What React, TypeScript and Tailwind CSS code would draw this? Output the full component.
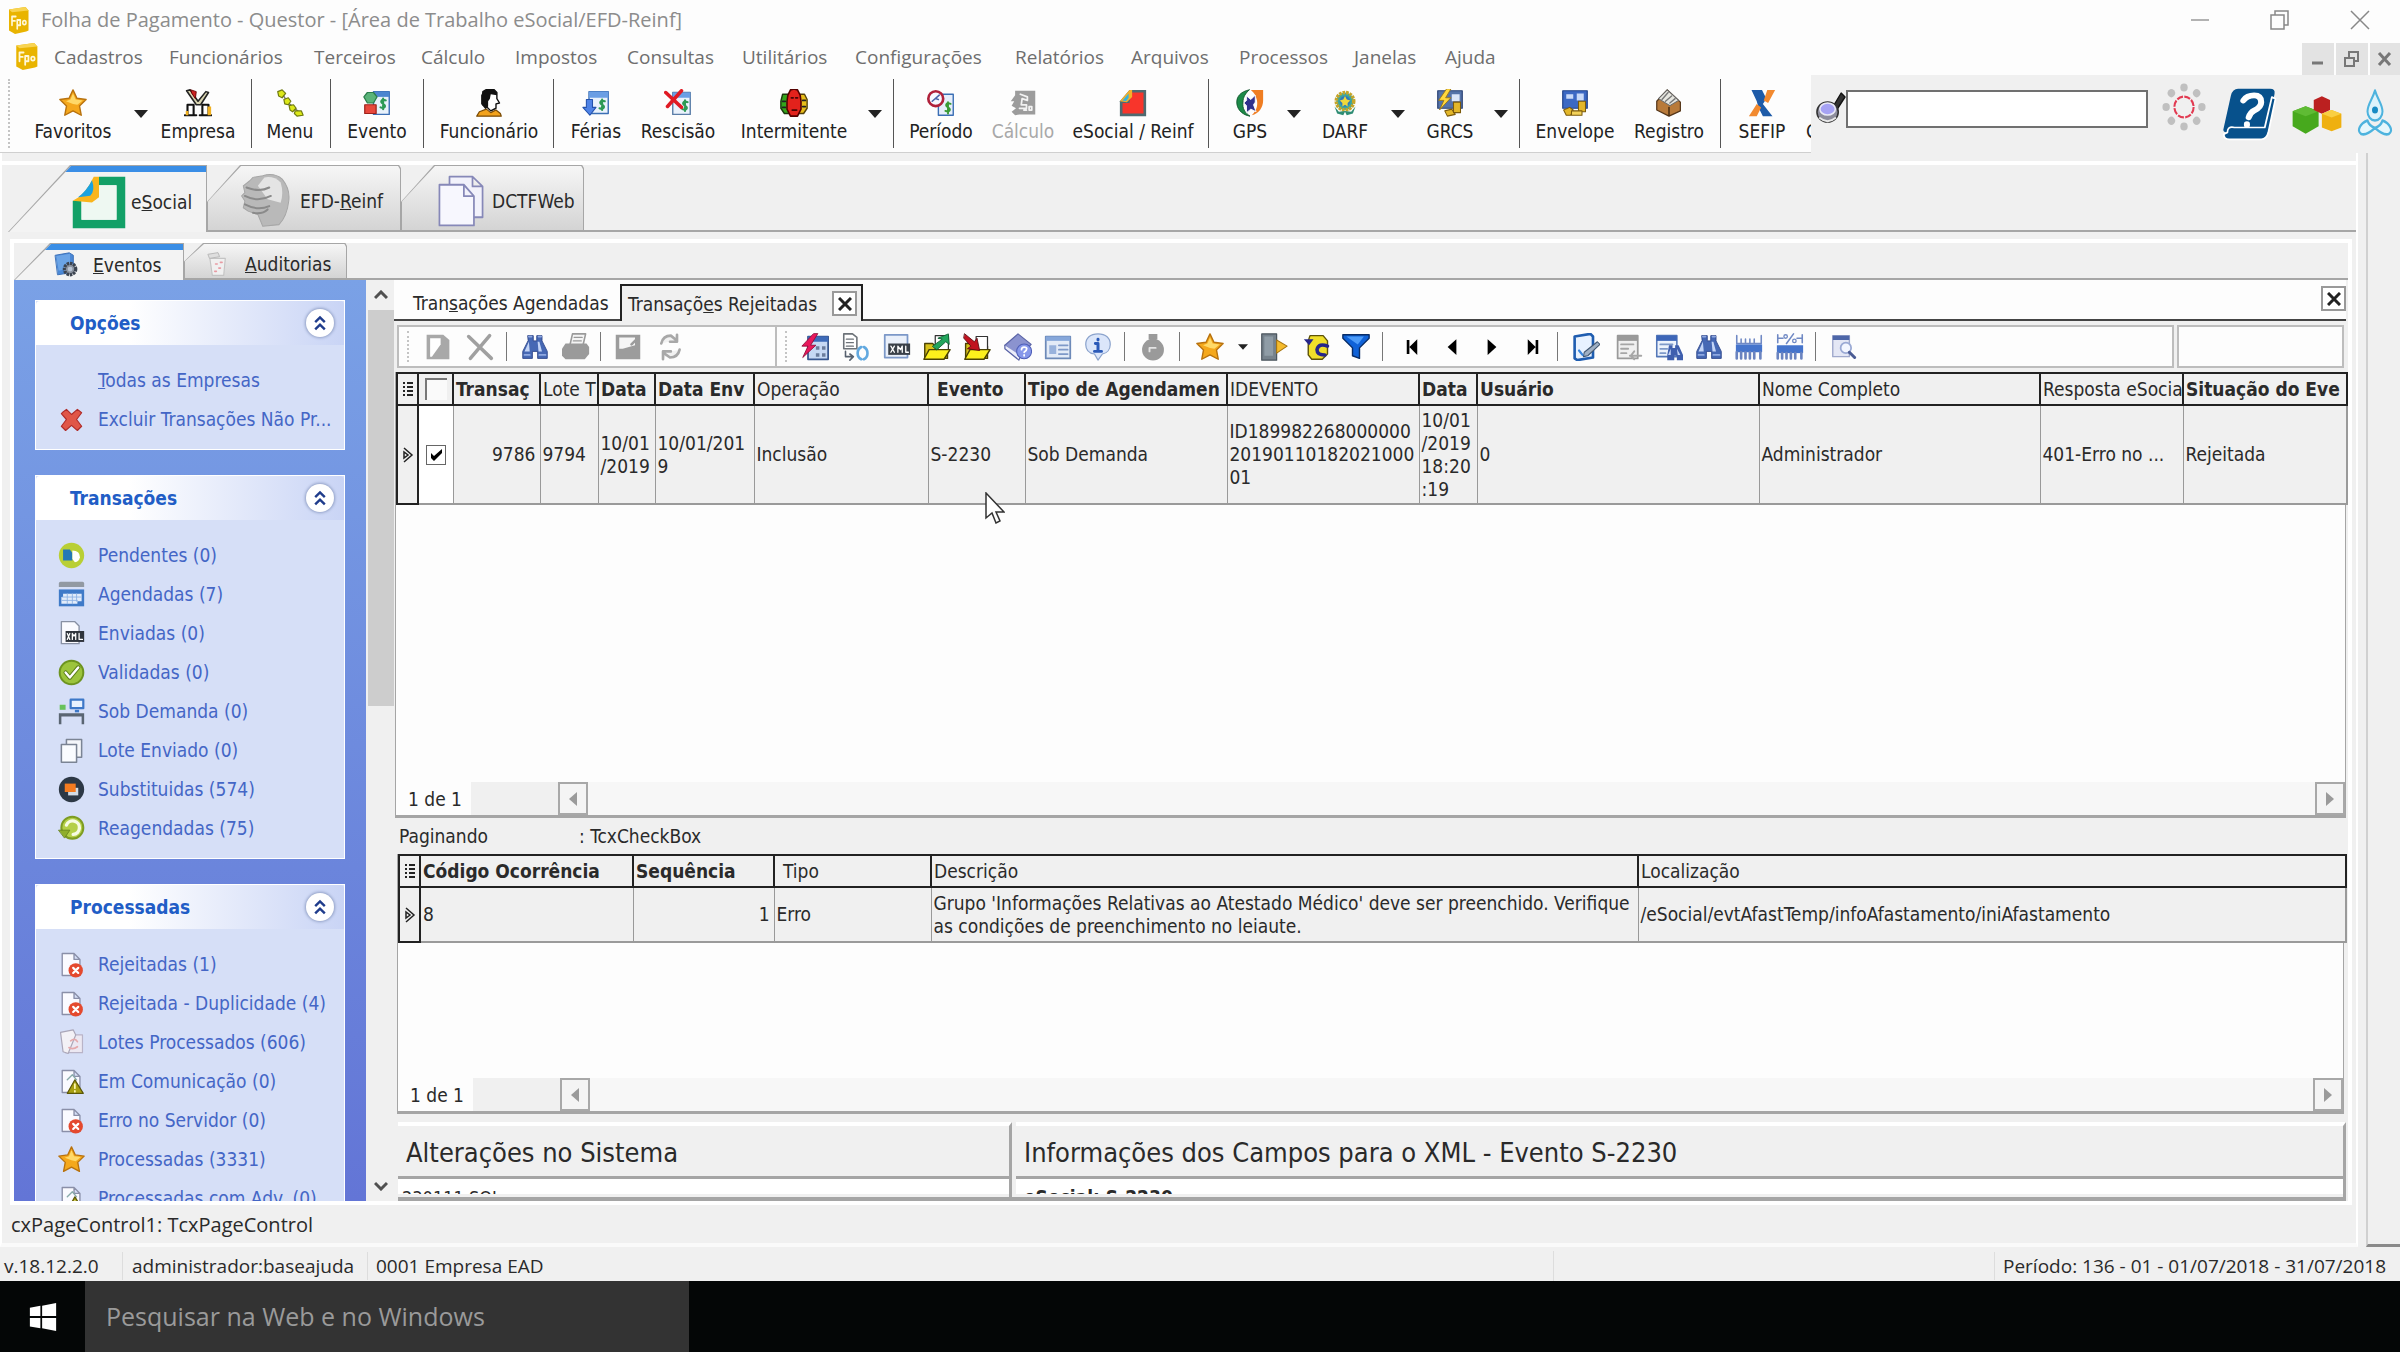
import React from 'react';

const P = (d: string, fill: string, stroke?: string, w?: number) => (
  <path d={d} fill={fill} stroke={stroke} strokeWidth={w ?? 1} strokeLinejoin="round" strokeLinecap="round" />
);

const Sheet = ({ c = '#8a8fa8' }: { c?: string }) => P('M5 3h14l7 7v19H5z M19 3v7h7', '#fafaff', c, 1.6);

const BINOC = 'M8 3h6v6h4V3h6v6l6 12v8H19v-8h-6v8H2v-8l6-12z';

// every drawing uses a 32x32 box
const icons: Record<string, React.ReactNode> = {
  logo: (
    <>
      {P('M4 4l22-3 4 4v23l-3 1-15 3-8-4z', '#e9b400')}
      {P('M4 4l22-3 4 4-22 2z', '#f8d452')}
      {P('M8 22V12h5M8 17h4M15 26V16h4v6h-4', 'none', '#fff8d8', 2.2)}
      <circle cx="24.500" cy="19" r="2.200" fill="none" stroke="#fff8d8" strokeWidth="2" />
    </>
  ),
  star: (
    <>
      {P('M16 1l4.5 9.6L31 12l-7.6 7.4L25.4 30 16 25 6.600 30l2-10.600L1 12l10.500-1.400z', '#f5a81c', '#b8720e', 1.6)}
      {P('M16 5l3 7 8 1-6 5-5-1-8-3 5-2z', '#ffd968')}
    </>
  ),
  tools: (
    <>
      {P('M3 2l4-1 9 13 9-11 3 1-9 14h-5z', '#d8d4b0', '#222', 1.8)}
      {P('M8 1l6 2-1 8-4-6z', '#c22', '#600', 1)}
      {P('M4 30V18h7v12M21 30V18h7v12M1 30h13M18 30h13', '#fff', '#111', 2.4)}
      {P('M2 25h3v5H2zM27 20h4v10h-4z', '#f0b020')}
    </>
  ),
  chain: (
    <>
      {P('M7 5l6 10 7 6 6 5', 'none', '#777', 1.6)}
      {P('M2 3l5-2 4 4-4 5-4-2zM9 12l5-2 3 4-3 4-4-1zM15 19l5-1 3 4-4 4-3-2zM22 25h7l2 5-7 1-3-3z', '#dce818', '#6f7a10', 1.4)}
    </>
  ),
  evento: (
    <>
      {P('M12 3h18v26H12z', '#e8f1fb', '#3b6fb5', 1.6)}
      {P('M12 3h18v6H12z', '#4c86d0')}
      {P('M26 13c-5-2-7 2-3 4s2 6-3 4M23 11v12', 'none', '#2d9a55', 2.4)}
      {P('M5 4h7l4 5-4 7H5L1 9z', '#59b379', '#2b7e4b', 1.4)}
      {P('M2 18h13v10H2z', '#e8483c', '#9e221b', 1.4)}
    </>
  ),
  person: (
    <>
      {P('M9 3l5-3h7l4 4v7l3 5-4 1v5l-6 3-5-5-4-2V7z', '#fff', '#111', 1.6)}
      {P('M9 3l5-3h7l4 4v3l-7-1-1 5-2 3v6l-3 3-5-6V7z', '#111')}
      {P('M2 31l3-5 8-3 5 4 6-3 5 4 1 3z', '#f2a21c', '#7a4a05', 1.4)}
    </>
  ),
  ferias: (
    <>
      {P('M8 3h22v25H8z', '#eaf2fc', '#3b6fb5', 1.6)}
      {P('M8 3h22v7H8z', '#6a9ee4')}
      {P('M26 14c-5-2-7 2-3 4s2 6-3 4M23 12v12', 'none', '#2d9a55', 2.4)}
      {P('M5 12h7v9h4l-7 9-8-9h4z', '#4f83e6', '#2452ac', 1.2)}
    </>
  ),
  rescisao: (
    <>
      {P('M10 4h20v25H10z', '#eaf2fc', '#5b7ea8', 1.6)}
      {P('M10 4h20v6H10z', '#6a9ee4')}
      {P('M27 15c-5-2-7 2-3 4s2 6-3 4M24 13v12', 'none', '#2d9a55', 2.4)}
      {P('M2 4l18 17M20 2L4 20', 'none', '#e01a24', 4)}
    </>
  ),
  trio: (
    <>
      {P('M3 6h9v22H5l-4-6v-8z', '#35a51c', '#1a3b0d', 1.6)}
      {P('M20 6h8l3 6v10l-4 6h-7z', '#e8bd1a', '#54420b', 1.6)}
      {P('M12 1l4-1 4 1 3 6 1 7v9l-4 8h-8l-4-8v-9l1-7z', '#e3221c', '#500', 1.8)}
      {P('M3 14h3M26 13h3M3 21h3M26 20h3', 'none', '#222', 2)}
      {P('M13 10h2M18 10h2M14 24h5', 'none', '#4a0505', 2)}
    </>
  ),
  periodo: (
    <>
      {P('M13 6h17v24H13z', '#e6eefb', '#3b6fb5', 1.6)}
      {P('M27 17c-5-2-7 2-3 4s2 6-3 4M24 15v13', 'none', '#3a9a35', 2.2)}
      <circle cx="10" cy="11" r="8.500" fill="#f6f8ff" stroke="#b0203a" strokeWidth="3" />
      {P('M6 14l8-7M10 11l3 1', 'none', '#4a62a8', 1.8)}
    </>
  ),
  calculo: (
    <>
      {P('M7 2h23v27H12l-5 1-4-4 5-4-5-3 3-5H2l5-7z', '#9c9c9c')}
      {P('M13 6l8 3v4l-6-2-1 7h6v4h-8M23 20h3v4h-3zM17 24h3', 'none', '#f2f2f2', 2)}
    </>
  ),
  reinf: (
    <>
      {P('M12 1h19v30H1V14z', '#4f6a70')}
      {P('M14 4h14v24H4V16h8z', '#f8352b')}
      {P('M1 14L12 1h3v8l-6 6z', '#f4b02a')}
      {P('M4 13l7-8v5l-3 4z', '#35b3dd')}
    </>
  ),
  gps: (
    <>
      {P('M15 1C5 3 0 9 1 17c1 8 8 13 15 14-6-4-9-9-8-16 0-6 3-10 7-14z', '#1c8a48', '#0d5429', 1)}
      {P('M17 1h14v12c0 8-5 15-13 17 5-5 7-10 6-17-1-5-3-9-7-12z', '#ef7d22')}
      {P('M12 8l5 4 5-5v8l-2 3 3 8-6-3-5 4v-8l-3-3 3-3z', '#30308c', '#fff', 1)}
    </>
  ),
  darf: (
    <>
      <circle cx="16" cy="14" r="10" fill="#3aa6a0" stroke="#c6a528" strokeWidth="4" strokeDasharray="3 1" />
      <circle cx="16" cy="14" r="6" fill="#2f78bb" />
      {P('M16 8l2 4 4 1-3 3v4l-3-2-3 2v-4l-3-3 4-1z', '#f0d83b')}
      {P('M4 20l3 8 7 2 2-4 2 4 7-2 3-8-5 6-7-1-7 1z', '#2f8d74')}
    </>
  ),
  coins: (
    <>
      {P('M2 2h28v20H2z', '#3c69c4', '#23458c', 1.4)}
      {P('M6 6h8v5H6zM18 5h8v8h-8z', '#c9daf8')}
      {P('M20 14h8v12h-8z', '#e3b72a', '#7c5b0b', 1.2)}
      {P('M3 24l7-3 4 3-3 6H6z', '#e3b72a', '#7c5b0b', 1.2)}
      {P('M12 25h12v5H12z', '#f3d25a', '#7c5b0b', 1.2)}
    </>
  ),
  grcs: (
    <>
      {P('M2 2h28v20H2z', '#5573a8', '#2c4476', 1.4)}
      {P('M18 6h9v8h-9z', '#dbe5f8')}
      {P('M12 0L3 13h6l-5 11 13-14h-6l6-10z', '#ffd83e', '#9c7410', 1)}
      {P('M20 15h8v12h-8zM10 25l8-2 4 6-9 2z', '#e3b72a', '#7c5b0b', 1.2)}
    </>
  ),
  registro: (
    <>
      {P('M14 1l15 14v10L16 31 2 24V14z', '#b87a3a', '#54361a', 1.4)}
      {P('M14 1l13 12-10 6L4 11z', '#e6e6e0', '#666', 1.2)}
      {P('M15 4L8 12M19 8l-7 6M23 11l-6 5', 'none', '#777', 1.6)}
      {P('M16 21v9', 'none', '#3f270f', 1.6)}
    </>
  ),
  sefip: (
    <>
      {P('M4 1h12l5 10-4 6 11 14H17l-5-10-2-7z', '#1e5ba8')}
      {P('M22 1h9l-8 15-5-3zM10 17l5 4-5 10H1z', '#f28a30')}
    </>
  ),
  spyglass: (
    <>
      {P('M19 15L27 2l4 4-8 12z', '#333', '#111', 1.4)}
      <ellipse cx="13" cy="21" rx="11" ry="10" fill="#8d8d9c" stroke="#333" strokeWidth="1.600" />
      <ellipse cx="13" cy="18" rx="8" ry="6" fill="#a6a2f4" stroke="#e9e9f6" strokeWidth="1.600" />
      {P('M5 27c5 4 11 4 16 0', 'none', '#e9e9e9', 2)}
    </>
  ),
  ring: (
    <>
      {[0, 45, 90, 135, 180, 225, 270, 315].map((a) => (
        <circle key={a} cx="16" cy="3" r="2.700" fill="#c0c0c0" transform={`rotate(${a} 16 16)`} />
      ))}
      <circle cx="16" cy="16" r="7" fill="none" stroke="#e23b52" strokeWidth="1.500" strokeDasharray="4.500 1" />
    </>
  ),
  help: (
    <>
      {P('M9 1h18q3 0 2.500 3L26 24q-1 3-4 3H3Q0 27 1 24L5 5q1-4 4-4z', '#07518c')}
      {P('M3 27q0-4 4-3h17l4-18 2 1-4 20q-1 4-4 4H4q-3 0-3-3z', '#07518c', '#fff', 1)}
      {P('M12 8q2-3 6-3t4 4q0 3-4 5-2 1-3 4M14 22v0.500', 'none', '#fff', 3.4)}
    </>
  ),
  cubes: (
    <>
      {P('M1 13l8-4 8 4v12l-8 6-8-6z', '#47a91d')}
      {P('M1 13l8 4 8-4-8-4z', '#5fbb34')}
      {P('M14 4l5-3 5 3v8l-5 3-5-3z', '#bb2020')}
      {P('M19 15l6-3 6 3v11l-6 3-6-3z', '#efb010')}
      {P('M19 15l6 3 6-3-6-3z', '#f9cf42')}
    </>
  ),
  yoga: (
    <>
      {P('M16 1c2 6 6 9 6 14a6 6 0 0 1-12 0c0-5 4-8 6-14z', '#ddf3fb', '#4db3de', 1.6)}
      <circle cx="16" cy="14" r="2.400" fill="#178bc4" />
      {P('M10 21c-6 2-9 7-5 9 3 1 7-1 11-4 4 3 8 5 11 4 4-2 1-7-5-9-1 3-3 4-6 5-3-1-5-2-6-5z', '#e6f7fc', '#4db3de', 1.7)}
    </>
  ),
  esocial: (
    <>
      {P('M16 1h15v30H1V15h5v11h20V6H14z', '#12a067')}
      {P('M16 6h10v20H6V15h9z', '#eef8f2')}
      {P('M1 15Q8 12 13 1h3v12l-4 3z', '#f9b51c')}
      {P('M4 13Q9 9 12 3q2 6-1 9z', '#1aa2e0')}
    </>
  ),
  fist: (
    <>
      {P('M14 1q7-2 12 2 5 6 4 13-1 9-6 14l-10 1-3-7-6-2-3-2 1-4-2-3 2-2-1-4 4-3 2-2z', '#b9b9b9', '#a6a6a6', 0.600)}
      {P('M15 2q6-1 10 3 2 6 0 12l-8-2-6-8z', '#e4e4e4')}
      {P('M4 8q8 3 14 0M3 13q8 4 16 0M3 18q8 4 15 1M8 23q6 1 9-2', 'none', '#8a8a8a', 1.200)}
    </>
  ),
  pages: (
    <>
      {P('M8 1h16l7 6v19H8z M24 1v6h7', '#f2f2fb', '#8688b8', 1.2)}
      {P('M1 6h17l7 7v18H1z M18 6v7h7', '#f7f7fe', '#8688b8', 1.2)}
    </>
  ),
  gear: (
    <>
      {P('M3 4l17-3 5 3v21L6 28z', '#4a88d6', '#3d71b8', 1.2)}
      {P('M4 5l17-3v18L7 23z', '#6ba4e6')}
      <circle cx="21" cy="21" r="7" fill="#8b93a0" stroke="#3c4450" strokeWidth="4" strokeDasharray="3 1" />
      <circle cx="21" cy="21" r="3" fill="#b9c4d4" />
    </>
  ),
  bin: (
    <>
      {P('M6 9h19l-2 21H9z', '#f0f0f0', '#c4c4c4', 1.4)}
      {P('M4 4l12-2 2 5-12 2z', '#dedede', '#b8b8b8', 1.2)}
      {P('M13 16h2M19 14h2M17 21h2M12 25h2', 'none', '#e89aa2', 2)}
    </>
  ),
  lots: (
    <>
      {P('M9 7h20v21H9z', '#ece8f2', '#b9b4c8', 1.4)}
      {P('M3 4l15-3 3 6-9 22-6-2z', '#f3f1f6', '#aaa6b8', 1.4)}
      {P('M15 14q5-4 8 1M13 22q5 3 10-1', 'none', '#e4a9ac', 2)}
    </>
  ),
  redx: P('M6 7l4-3 6 6 7-6 5 4-6 8 6 8-5 5-7-6-7 6-5-5 6-8-6-7z', '#e05648', '#b02c2a', 1.4),
  pend: (
    <>
      <circle cx="16" cy="16" r="15" fill="#b9cf35" />
      {P('M6 9h8l3 4v9H6z', '#2478b5')}
      {P('M17 10q9 0 9 8-1 5-6 6l-3-4z', '#fff')}
    </>
  ),
  calendar: (
    <>
      {P('M1 3q0-2 2-2h26q2 0 2 2v4H1z', '#9299a2')}
      {P('M1 10h30v20H1z', '#3f7ac8')}
      {P('M6 15h22v9h-5v3H4v-8h2z', '#e2ecfa')}
      {P('M5 19h22M5 23h18M11 15v12M17 15v12M22 15v9', 'none', '#8bb0e2', 1)}
    </>
  ),
  xml: (
    <>
      {P('M4 2h16l5 5v21H4z', '#fafaff', '#8890a4', 1.6)}
      {P('M9 13h22v13H9z', '#2f343c')}
      {P('M11 16l3 7M14 16l-3 7M17 23v-7l2 3 2-3v7M25 16v7h4', 'none', '#fff', 1.5)}
    </>
  ),
  xmlgrid: (
    <>
      {P('M2 2h26v26H2z', '#eaf0fa', '#7c98c8', 2)}
      {P('M6 12h25v13H6z', '#3a4048')}
      {P('M9 15l4 7M13 15l-4 7M17 22v-7l3 4 2-4v7M26 15v7h3', 'none', '#fff', 1.5)}
    </>
  ),
  check: (
    <>
      <circle cx="16" cy="16" r="14" fill="#9cc43c" stroke="#6d9420" strokeWidth="2.400" />
      {P('M9 16l5 6 10-12', 'none', '#587a18', 5)}
      {P('M9 16l5 6 10-12', 'none', '#fff', 2.8)}
    </>
  ),
  desk: (
    <>
      {P('M15 2h15v10H15z', '#e8f2ff', '#3d78c8', 2.6)}
      {P('M20 14h5v3h-5z', '#3d78c8')}
      {P('M2 8h7v6H2z', '#69c25a')}
      {P('M1 18h30v13h-3v-9H4v9H1z', '#5a6572')}
    </>
  ),
  stack: (
    <>
      {P('M10 3h18v21H10z', '#f4f6fa', '#7b8494', 1.8)}
      {P('M4 9h18v21H4z', '#fafcff', '#7b8494', 1.8)}
    </>
  ),
  subst: (
    <>
      <circle cx="16" cy="16" r="15" fill="#2d3845" />
      {P('M12 14h12v9H12z', '#d3dbe4')}
      {P('M8 9h13v10H8z', '#f47b20')}
    </>
  ),
  redo: (
    <>
      <circle cx="17" cy="15" r="13" fill="#b4cf48" stroke="#7d9c22" strokeWidth="2.400" />
      {P('M10 12a8 8 0 1 1 8 11', 'none', '#f6fbe4', 4)}
      {P('M1 18h13l-6 9z', '#8fae2c', '#66821a', 1)}
    </>
  ),
  reject: (
    <>
      <Sheet />
      <circle cx="21" cy="23" r="8.500" fill="#e4492e" />
      {P('M18 20l6 6M24 20l-6 6', 'none', '#fff', 2.6)}
    </>
  ),
  warn: (
    <>
      <Sheet />
      {P('M11 14l6-6 5 6', 'none', '#8aa', 1.6)}
      {P('M20 14l10 16H11z', '#a8a012', '#5a5608', 1.4)}
      {P('M20 19v5M20 27v1', 'none', '#fdf7b0', 2)}
    </>
  ),
  newdoc: (
    <>
      {P('M3 2h19l7 6v22H3z', '#a8a8a8')}
      {P('M7 6h12v7L9 27H7z', '#fff')}
    </>
  ),
  cross: P('M3 4L29 29M27 3L5 29', 'none', '#a0a0a0', 4),
  binoc: (
    <>
      {P(BINOC, '#4668b4', '#2c4488', 1)}
      {P('M9 10l-5 11h6zM19 10h2l3 11h-4z', '#c3d4f6')}
      {P('M9 4h3M20 4h3M4 25h6M21 25h7', 'none', '#8fa8e0', 2)}
    </>
  ),
  printer: (
    <>
      {P('M9 14L12 1h15l-3 13', '#f4f4f4', '#9a9a9a', 1.8)}
      {P('M14 5h9M13 9h9', 'none', '#9a9a9a', 1.6)}
      {P('M4 12h24l3 4v8l-5 6H4l-4-4v-8z', '#9a9a9a')}
    </>
  ),
  save: (
    <>
      {P('M2 2h28v28H2z', '#9c9c9c')}
      {P('M6 5h18v9L10 18H6z', '#f6f6f6')}
      {P('M20 13l8-8', 'none', '#9c9c9c', 3)}
    </>
  ),
  refresh: P('M6 12q2-9 11-9l6 5M24 2v8h-8M27 19q-2 9-11 9l-7-5M8 30v-9h9', '#f2f2f2', '#a8a8a8', 3),
  calcbolt: (
    <>
      {P('M8 4h23v26H8z', '#c6d8f4', '#39578f', 2)}
      {P('M8 4h23v6H8z', '#3d6ab8')}
      {P('M17 15h4v4h-4zM24 15h4v4h-4zM17 23h4v4h-4zM24 23h4v4h-4z', '#6b7c9c')}
      {P('M14 1L1 15h7L2 28 17 14h-6l8-13z', '#e8185c', '#8f0c38', 1)}
    </>
  ),
  docsync: (
    <>
      {P('M2 1h10l5 4v13H2z', '#fff', '#6c7278', 1.8)}
      {P('M5 7h8M5 11h8M5 15h8', 'none', '#6c7278', 1.5)}
      {P('M4 21v6h8M9 24l4 3-4 4', 'none', '#56606e', 1.8)}
      {P('M22 16a8 8 0 0 0 0 14M25 30a8 8 0 0 0 0-14', 'none', '#62a9e0', 3)}
    </>
  ),
  foldergreen: (
    <>
      {P('M2 12h9l3 3h14v14H2z', '#d8c21a', '#4a4204', 1.6)}
      {P('M14 3h15v18H14z', '#fff', '#333', 1.400)}
      {P('M7 19h24l-7 11H1z', '#fcf01c', '#4a4204', 1.6)}
      {P('M11 15L22 7l-5-1 12-5 1 12-4-3-10 9z', '#22a55c', '#0e5f31', 1)}
    </>
  ),
  folderred: (
    <>
      {P('M3 12h9l3 3h13v14H3z', '#d8c21a', '#4a4204', 1.6)}
      {P('M15 4h13v16H15z', '#fff', '#333', 1.400)}
      {P('M8 19h23l-7 11H2z', '#fcf01c', '#4a4204', 1.6)}
      {P('M2 1l11 9 3-4 3 14-14-2 4-3L1 6z', '#c1121f', '#5c0a10', 1)}
    </>
  ),
  bookhelp: (
    <>
      {P('M1 14L16 1l15 12-14 15z', '#8b93cf', '#5a63a6', 1.400)}
      {P('M1 14v4l16 13 2-5', '#eceefa', '#5a63a6', 1.400)}
      <circle cx="23" cy="21" r="8.500" fill="#8798ea" stroke="#4f5fb8" strokeWidth="1.200" />
      {P('M20 19q0-3 3-3t3 2-3 4M23 25v1', 'none', '#fff', 2)}
    </>
  ),
  window: (
    <>
      {P('M2 4h28v25H2z', '#e3ebf7', '#6d8ab8', 2)}
      {P('M2 4h28v5H2z', '#86a7da')}
      {P('M6 14h8v10H6z', '#98b2dc')}
      {P('M17 14h10M17 19h10M17 24h10', 'none', '#7e99c8', 2)}
    </>
  ),
  info: (
    <>
      {P('M16 1c9 0 14 5 14 12 0 6-4 10-9 11l-5 7-4-7C6 23 2 19 2 13 2 6 7 1 16 1z', '#dbe6fa', '#8ba3cc', 1.400)}
      {P('M16 7v1M13 12h3v9M12 21h8', 'none', '#2b5ab8', 3.4)}
    </>
  ),
  timer: (
    <>
      {P('M11 1h10v5l-2 3h-6l-2-3z', '#9a9a9a')}
      <circle cx="16" cy="19" r="12.500" fill="#9a9a9a" />
      {P('M12 21v-4h7', 'none', '#e4e4e4', 2.200)}
    </>
  ),
  door: (
    <>
      {P('M2 1h17v30H2z', '#76828c', '#4b555e', 1.400)}
      {P('M5 4h10v22H5z', '#8f9ca6')}
      {P('M19 8l12 7-12 8z', '#f5bb2c', '#a57310', 1.200)}
    </>
  ),
  scroll: (
    <>
      {P('M8 3h15l5 6v15l-6 6H10l-4-5V9z', '#f0df2a', '#5d5208', 1.6)}
      {P('M1 7h11l-5 7z', '#26268a')}
      {P('M28 15q-10-4-12 4 0 6 9 6', 'none', '#26268a', 4)}
    </>
  ),
  funnel: (
    <>
      {P('M1 2h30v4L20 17v12l-8-3v-9L1 6z', '#0f62d8', '#082c66', 1.600)}
      {P('M5 4h20l-7 9z', '#4c9bf8')}
    </>
  ),
  navfirst: P('M10 8h3v16h-3zM22 7v18l-9-9z', '#000'),
  navprev: P('M21 7v18l-10-9z', '#000'),
  navnext: P('M11 7v18l10-9z', '#000'),
  navlast: P('M19 8h3v16h-3zM10 7v18l9-9z', '#000'),
  edit: (
    <>
      {P('M3 4l18-3 3 3v24L6 31l-3-2z', '#e8f2ff', '#1f5db0', 3)}
      {P('M14 22L29 10l3 3-14 13-5 1z', '#9fb0c4', '#40566f', 1.200)}
      {P('M8 20l4 5', 'none', '#3b86dc', 2.500)}
    </>
  ),
  docgray: (
    <>
      {P('M3 3h23v26H3z', '#f0f0f0', '#9a9a9a', 2)}
      {P('M3 3h23v6H3z', '#9a9a9a')}
      {P('M7 13h14M7 18h8M7 23h6M17 26h13M22 21l-4 5 4 4', 'none', '#a6a6a6', 2.200)}
    </>
  ),
  docbinoc: (
    <>
      {P('M2 3h23v24H2z', '#edf3fc', '#5578b8', 1.800)}
      {P('M2 3h23v6H2z', '#3d66b8')}
      {P('M6 13h14M6 18h8M6 23h6', 'none', '#7e99c8', 2)}
      {P('M16 14h4v3h3v-3h4l5 11v6h-7v-5h-3v5h-8v-6z', '#3f5fae')}
      {P('M18 18l-3 7h3zM25 18l4 7h-3z', '#c3d4f6')}
    </>
  ),
  ruler: (
    <>
      {P('M2 3v9h28V3M7 7v4M12 7v4M17 7v4M22 7v4', 'none', '#7089c4', 1.800)}
      {P('M1 13h30v9H1z', '#4574cc')}
      {P('M2 22v7M7 22v7M12 22v7M17 22v7M22 22v7M29 22v7', 'none', '#6a83bf', 3)}
    </>
  ),
  rulerpct: (
    <>
      {P('M2 2v9M2 6h6M30 2v9M30 6h-6M12 12l8-11', 'none', '#7089c4', 1.800)}
      <circle cx="11" cy="4" r="2" fill="none" stroke="#7089c4" strokeWidth="1.500" />
      <circle cx="21" cy="9" r="2" fill="none" stroke="#7089c4" strokeWidth="1.500" />
      {P('M1 14h30v9H1z', '#4574cc')}
      {P('M2 23v6M7 23v6M12 23v6M17 23v6M22 23v6M29 23v6', 'none', '#6a83bf', 3)}
    </>
  ),
  preview: (
    <>
      {P('M2 3h19v24H2z', '#e4e7f5', '#a0a9cc', 1.600)}
      {P('M2 3h19v5H2z', '#4d66a8')}
      <circle cx="17" cy="17" r="6" fill="#f3f6ff" stroke="#9aa9d4" strokeWidth="2" />
      {P('M21 22l6 6', 'none', '#4b5c94', 3.500)}
    </>
  ),
  windows: P('M1 6l12-2v11H1zM15 4l16-3v14H15zM1 17h12v11L1 26zM15 17h16v14l-16-3z', '#fff'),
};

const Icon = ({ name, className = 'size-8' }: { name: string; className?: string }) => (
  <svg viewBox="0 0 32 32" preserveAspectRatio="none" className={`shrink-0 ${className}`} aria-hidden="true">
    {icons[name]}
  </svg>
);

const Caret = () => (
  <svg viewBox="0 0 14 8" className="h-2 w-3.5" aria-hidden="true">
    <path d="M0 0h14L7 8z" fill="#222" />
  </svg>
);

const Grip = () => <span className="my-1 ml-2 w-0 border-l-2 border-dotted border-[#c4c4c4]" />;

const menus = [
  ['Cadastros', 'w-[115px]'],
  ['Funcionários', 'w-[145px]'],
  ['Terceiros', 'w-[107px]'],
  ['Cálculo', 'w-[94px]'],
  ['Impostos', 'w-[112px]'],
  ['Consultas', 'w-[115px]'],
  ['Utilitários', 'w-[113px]'],
  ['Configurações', 'w-[160px]'],
  ['Relatórios', 'w-[116px]'],
  ['Arquivos', 'w-[108px]'],
  ['Processos', 'w-[115px]'],
  ['Janelas', 'w-[91px]'],
  ['Ajuda', 'w-[70px]'],
];

type Tool = { w: string; kind?: 'sep' | 'caret'; label?: string; icon?: string; off?: boolean };

const tools: Tool[] = [
  { w: 'w-[114px]', label: 'Favoritos', icon: 'star' },
  { w: 'w-[22px]', kind: 'caret', label: 'Mais favoritos' },
  { w: 'w-[92px]', label: 'Empresa', icon: 'tools' },
  { w: 'w-[14px]', kind: 'sep' },
  { w: 'w-[64px]', label: 'Menu', icon: 'chain' },
  { w: 'w-[16px]', kind: 'sep' },
  { w: 'w-[78px]', label: 'Evento', icon: 'evento' },
  { w: 'w-[14px]', kind: 'sep' },
  { w: 'w-[118px]', label: 'Funcionário', icon: 'person' },
  { w: 'w-[10px]', kind: 'sep' },
  { w: 'w-[76px]', label: 'Férias', icon: 'ferias' },
  { w: 'w-[88px]', label: 'Rescisão', icon: 'rescisao' },
  { w: 'w-[144px]', label: 'Intermitente', icon: 'trio' },
  { w: 'w-[18px]', kind: 'caret', label: 'Mais intermitente' },
  { w: 'w-[18px]', kind: 'sep' },
  { w: 'w-[78px]', label: 'Período', icon: 'periodo' },
  { w: 'w-[86px]', label: 'Cálculo', icon: 'calculo', off: true },
  { w: 'w-[134px]', label: 'eSocial / Reinf', icon: 'reinf' },
  { w: 'w-[16px]', kind: 'sep' },
  { w: 'w-[68px]', label: 'GPS', icon: 'gps' },
  { w: 'w-[20px]', kind: 'caret', label: 'Mais GPS' },
  { w: 'w-[82px]', label: 'DARF', icon: 'darf' },
  { w: 'w-[24px]', kind: 'caret', label: 'Mais DARF' },
  { w: 'w-[80px]', label: 'GRCS', icon: 'grcs' },
  { w: 'w-[22px]', kind: 'caret', label: 'Mais GRCS' },
  { w: 'w-[14px]', kind: 'sep' },
  { w: 'w-[98px]', label: 'Envelope', icon: 'coins' },
  { w: 'w-[90px]', label: 'Registro', icon: 'registro' },
  { w: 'w-[12px]', kind: 'sep' },
  { w: 'w-[72px]', label: 'SEFIP', icon: 'sefip' },
];

const ToolItem = ({ t }: { t: Tool }) => {
  if (t.kind === 'sep') {
    return (
      <span className={`flex shrink-0 justify-center py-1 ${t.w}`}>
        <span className="w-px bg-[#555]" />
      </span>
    );
  }
  if (t.kind === 'caret') {
    return (
      <button className={`flex shrink-0 items-center justify-center ${t.w}`} aria-label={t.label}>
        <Caret />
      </button>
    );
  }
  return (
    <button
      disabled={t.off}
      className={`flex shrink-0 flex-col items-center pt-3.5 whitespace-nowrap ${t.w} ${t.off ? 'text-[#a8a8a8]' : 'text-[#222]'}`}
    >
      <Icon name={t.icon!} className="size-7" />
      <span className="leading-7">{t.label}</span>
    </button>
  );
};

const Title = () => (
  <header className="bg-[#fdfdfd] font-['Open_Sans','Noto_Sans',sans-serif]">
    <div className="flex h-[40px] items-center pl-1.5 text-[#8c8c8c]">
      <Icon name="logo" className="h-7 w-6" />
      <h1 className="ml-[11px] flex-1 text-[20px] whitespace-nowrap">Folha de Pagamento - Questor - [Área de Trabalho eSocial/EFD-Reinf]</h1>
      <div className="flex">
        <button className="flex w-20 justify-center" aria-label="Minimizar">
          <svg viewBox="0 0 20 20" className="size-5"><path d="M1 10h18" stroke="#999" strokeWidth="1.500" /></svg>
        </button>
        <button className="flex w-20 justify-center" aria-label="Restaurar">
          <svg viewBox="0 0 20 20" className="size-5"><path d="M1 5h13v14H1zM5 5V1h13v14h-4" fill="none" stroke="#888" strokeWidth="1.500" /></svg>
        </button>
        <button className="flex w-20 justify-center" aria-label="Fechar">
          <svg viewBox="0 0 20 20" className="size-5"><path d="M1 1l18 18M19 1L1 19" stroke="#888" strokeWidth="1.500" /></svg>
        </button>
      </div>
    </div>
    <div className="flex h-[35px] items-stretch pl-[13px] text-[#6e6e6e]">
      <Icon name="logo" className="mt-0.5 h-7 w-[26px]" />
      <nav className="ml-[15px] flex flex-1 items-center text-[19px]">
        {menus.map(([m, w]) => (
          <button key={m} className={`text-left whitespace-nowrap ${w}`}>{m}</button>
        ))}
      </nav>
      <div className="mt-[3px] flex gap-0.5">
        <button className="flex w-8 items-center justify-center bg-[#e3e3e3]" aria-label="Minimizar janela">
          <svg viewBox="0 0 20 20" className="size-5"><path d="M4 14h11" stroke="#777" strokeWidth="3" /></svg>
        </button>
        <button className="flex w-8 items-center justify-center bg-[#e3e3e3]" aria-label="Restaurar janela">
          <svg viewBox="0 0 20 20" className="size-5"><path d="M3 9h9v8H3zM7 8V3h9v9h-4" fill="none" stroke="#777" strokeWidth="2" /></svg>
        </button>
        <button className="flex w-[30px] items-center justify-center bg-[#e3e3e3]" aria-label="Fechar janela">
          <svg viewBox="0 0 20 20" className="size-5"><path d="M4 4l11 12M15 4L4 16" stroke="#777" strokeWidth="3" /></svg>
        </button>
      </div>
    </div>
  </header>
);

const Toolbar = () => (
  <div className="flex h-[78px] bg-[#f0f0f0]">
    <div className="flex min-w-0 basis-[1811px] overflow-hidden border-b border-[#cfcfcf] bg-[#fdfdfd]">
      <Grip />
      <div className="ml-1.5 flex">
        {tools.map((t, i) => <ToolItem key={i} t={t} />)}
        <span className="pt-[42px] pl-2 leading-7 text-[#222]">C</span>
      </div>
    </div>
    <div className="flex shrink-0 items-start pl-1">
      <label htmlFor="busca" className="pt-4"><Icon name="spyglass" className="h-8 w-[31px]" /></label>
      <input id="busca" className="mt-[15px] h-[38px] w-[302px] border-2 border-[#707070] bg-white px-2" />
      <Icon name="ring" className="mt-2 ml-3.5 h-12 w-11" />
      <Icon name="help" className="mt-3 ml-4 h-[54px] w-[57px]" />
      <Icon name="cubes" className="mt-5 ml-3 h-10 w-[52px]" />
      <Icon name="yoga" className="mt-3.5 ml-3 h-12 w-10" />
    </div>
  </div>
);

const slantBig = '[clip-path:polygon(0_100%,62px_0,100%_0,100%_100%)]';
const slantMid = '[clip-path:polygon(0_100%,0_55%,33px_0,99%_0,100%_5%,100%_100%)]';
const slantSmall = '[clip-path:polygon(0_100%,36px_0,100%_0,100%_100%)]';
const slantTiny = '[clip-path:polygon(0_100%,0_50%,19px_0,99%_0,100%_8%,100%_100%)]';

const TabShape = ({ clip, w, pad, active, children }: { clip: string; w: string; pad: string; active?: boolean; children: React.ReactNode }) => (
  <button role="tab" aria-selected={!!active} className={`flex bg-[#a6a6a6] px-px pt-px ${active ? '' : 'pb-0.5'} ${clip} ${w}`}>
    <span
      className={`flex flex-1 items-center whitespace-nowrap ${pad} ${clip} ${
        active ? 'border-t-6 border-[#3a8ee6] bg-[#f3f3f3]' : 'bg-linear-to-b from-[#f6f6f6] to-[#d4d4d4] pt-1.5'
      }`}
    >
      {children}
    </span>
  </button>
);

type Item = { icon?: string; text: string; accel?: boolean };

const panels: { title: string; items: Item[] }[] = [
  {
    title: 'Opções',
    items: [{ text: 'Todas as Empresas', accel: true }, { icon: 'redx', text: 'Excluir Transações Não Pr...' }],
  },
  {
    title: 'Transações',
    items: [
      { icon: 'pend', text: 'Pendentes (0)' },
      { icon: 'calendar', text: 'Agendadas (7)' },
      { icon: 'xml', text: 'Enviadas (0)' },
      { icon: 'check', text: 'Validadas (0)' },
      { icon: 'desk', text: 'Sob Demanda (0)' },
      { icon: 'stack', text: 'Lote Enviado (0)' },
      { icon: 'subst', text: 'Substituidas (574)' },
      { icon: 'redo', text: 'Reagendadas (75)' },
    ],
  },
  {
    title: 'Processadas',
    items: [
      { icon: 'reject', text: 'Rejeitadas (1)' },
      { icon: 'reject', text: 'Rejeitada - Duplicidade (4)' },
      { icon: 'lots', text: 'Lotes Processados (606)' },
      { icon: 'warn', text: 'Em Comunicação (0)' },
      { icon: 'reject', text: 'Erro no Servidor (0)' },
      { icon: 'star', text: 'Processadas (3331)' },
      { icon: 'warn', text: 'Processadas com Adv. (0)' },
    ],
  },
];

const Sidebar = () => (
  <aside className="flex w-[380px] shrink-0 overflow-hidden">
    <div className="flex w-[352px] flex-col gap-[25px] overflow-hidden bg-linear-to-b from-[#7aa1e6] to-[#6375d6] px-[21px] pt-5">
      {panels.map((p) => (
        <section key={p.title} className="shrink-0 border border-white bg-[#d6dff7]">
          <div className="flex h-11 items-center justify-between rounded-t bg-linear-to-r from-white from-30% to-[#c9d4f5] pr-2.5 pl-[34px]">
            <h2 className="text-[19px] font-bold text-[#215dc6]">{p.title}</h2>
            <button className="flex size-7 items-center justify-center rounded-full bg-white shadow-[0_0_3px_1px_#8f9ec4]" aria-label={`Recolher ${p.title}`}>
              <svg viewBox="0 0 16 20" className="h-4 w-3.5" fill="none" stroke="#1f3c8c" strokeWidth="3">
                <path d="M2 9l6-6 6 6M2 18l6-6 6 6" />
              </svg>
            </button>
          </div>
          <ul className="pt-4 pb-2.5">
            {p.items.map((it) => (
              <li key={it.text} className="h-[39px]">
                <a href="#" className="flex h-full items-center pl-[22px] whitespace-nowrap text-[#4466c6]">
                  <span className="w-10 shrink-0">{it.icon && <Icon name={it.icon} className="size-[27px]" />}</span>
                  <span>
                    {it.accel ? <><u>{it.text[0]}</u>{it.text.slice(1)}</> : it.text}
                  </span>
                </a>
              </li>
            ))}
          </ul>
        </section>
      ))}
    </div>
    <div className="ml-0.5 flex w-[26px] flex-col bg-[#f0f0f0]">
      <button className="flex h-[30px] items-center justify-center" aria-label="Rolar para cima">
        <svg viewBox="0 0 14 10" className="h-2.5 w-3.5" fill="none" stroke="#505050" strokeWidth="3"><path d="M1 8l6-6 6 6" /></svg>
      </button>
      <div className="flex-1"><div className="h-[46%] bg-[#cdcdcd]" /></div>
      <button className="flex h-[30px] items-center justify-center" aria-label="Rolar para baixo">
        <svg viewBox="0 0 14 10" className="h-2.5 w-3.5" fill="none" stroke="#505050" strokeWidth="3"><path d="M1 2l6 6 6-6" /></svg>
      </button>
    </div>
  </aside>
);

const CloseBox = () => (
  <button className="flex size-[25px] items-center justify-center border-2 border-[#999] bg-white" aria-label="Fechar aba">
    <svg viewBox="0 0 14 14" className="size-3.5" stroke="#222" strokeWidth="3"><path d="M1 1l12 12M13 1L1 13" /></svg>
  </button>
);

// [icon, width of its slot]; 'sep' draws a divider
const gridEdit = [
  ['newdoc', 'w-[42px]'], ['cross', 'w-[42px]'], ['sep', 'w-[10px]'], ['binoc', 'w-[48px]'], ['printer', 'w-[34px]'],
  ['sep', 'w-[14px]'], ['save', 'w-[42px]'], ['refresh', 'w-[42px]'],
];

const gridActions = [
  ['calcbolt', 'w-[40px]'], ['docsync', 'w-[42px]'], ['xmlgrid', 'w-[40px]'], ['foldergreen', 'w-[40px]'], ['folderred', 'w-[40px]'],
  ['bookhelp', 'w-[41px]'], ['window', 'w-[40px]'], ['info', 'w-[40px]'], ['sep', 'w-[12px]'], ['timer', 'w-[46px]'],
  ['sep', 'w-[6px]'], ['star', 'w-[56px]'], ['caret', 'w-[10px]'], ['door', 'w-[52px]'], ['scroll', 'w-[34px]'],
  ['funnel', 'w-[44px]'], ['sep', 'w-[8px]'], ['navfirst', 'w-[52px]'], ['navprev', 'w-[28px]'], ['navnext', 'w-[52px]'],
  ['navlast', 'w-[30px]'], ['sep', 'w-[18px]'], ['edit', 'w-[40px]'], ['docgray', 'w-[46px]'], ['docbinoc', 'w-[34px]'],
  ['binoc', 'w-[46px]'], ['ruler', 'w-[34px]'], ['rulerpct', 'w-[48px]'], ['sep', 'w-[2px]'], ['preview', 'w-[58px]'],
];

const IconStrip = ({ list }: { list: string[][] }) => (
  <>
    {list.map(([n, w], i) =>
      n === 'sep' ? (
        <span key={i} className={`flex shrink-0 justify-center py-[5px] ${w}`}><span className="w-px shrink-0 bg-[#777]" /></span>
      ) : (
        <button key={i} className={`flex shrink-0 items-center justify-center ${w}`} aria-label={n}>
          {n === 'caret' ? <Caret /> : <Icon name={n} className="size-7" />}
        </button>
      ),
    )}
  </>
);

type Col = { w: string; head: string; cell: string; bold?: boolean; right?: boolean; pad?: string };

const cols: Col[] = [
  { w: 'w-[87px]', head: 'Transaç', cell: '9786', bold: true, right: true },
  { w: 'w-[58px]', head: 'Lote T', cell: '9794', pad: 'pl-0.5' },
  { w: 'w-[57px]', head: 'Data', cell: '10/01\n/2019', bold: true },
  { w: 'w-[99px]', head: 'Data Env', cell: '10/01/201\n9', bold: true },
  { w: 'w-[174px]', head: 'Operação', cell: 'Inclusão' },
  { w: 'w-[97px]', head: 'Evento', cell: 'S-2230', bold: true, pad: 'pl-2' },
  { w: 'w-[202px]', head: 'Tipo de Agendamen', cell: 'Sob Demanda', bold: true },
  { w: 'w-[192px]', head: 'IDEVENTO', cell: 'ID189982268000000\n20190110182021000\n01' },
  { w: 'w-[58px]', head: 'Data', cell: '10/01\n/2019\n18:20\n:19', bold: true },
  { w: 'w-[282px]', head: 'Usuário', cell: '0', bold: true },
  { w: 'w-[281px]', head: 'Nome Completo', cell: 'Administrador' },
  { w: 'w-[143px]', head: 'Resposta eSocia', cell: '401-Erro no ...' },
  { w: 'w-[164px]', head: 'Situação do Eve', cell: 'Rejeitada', bold: true },
];

const errCols: Col[] = [
  { w: 'w-[213px]', head: 'Código Ocorrência', cell: '8', bold: true },
  { w: 'w-[141px]', head: 'Sequência', cell: '1', bold: true, right: true },
  { w: 'w-[157px]', head: 'Tipo', cell: 'Erro', pad: 'pl-2' },
  {
    w: 'w-[707px]',
    head: 'Descrição',
    cell: "Grupo 'Informações Relativas ao Atestado Médico' deve ser preenchido. Verifique\nas condições de preenchimento no leiaute.",
  },
  { w: 'w-[708px]', head: 'Localização', cell: '/eSocial/evtAfastTemp/infoAfastamento/iniAfastamento' },
];

const Bars = () => (
  <svg viewBox="0 0 12 18" className="mx-auto h-[18px] w-3" aria-hidden="true">
    <path d="M1 3h2M1 7h2M1 11h2M1 15h2M5 3h6M5 7h6M5 11h6M5 15h6" stroke="#222" strokeWidth="2" />
  </svg>
);

const RowMark = () => (
  <svg viewBox="0 0 12 16" className="mx-auto h-4 w-3" aria-hidden="true">
    <path d="M2 1l8 7-8 7M2 5v6l4-3z" fill="none" stroke="#222" strokeWidth="1.500" />
  </svg>
);

const Grid = ({ data, check, rowH }: { data: Col[]; check?: boolean; rowH: string }) => (
  <table className="w-full table-fixed border-collapse border-2 border-[#3c3c3c] border-r-[#9a9a9a] border-b-[#9a9a9a] bg-[#f0f0f0]">
    <thead>
      <tr className="h-8">
        <th className="w-[21px] border-2 border-[#222] p-0"><Bars /></th>
        {check && (
          <th className="w-[35px] border-2 border-[#222] p-0">
            <input type="checkbox" aria-label="Selecionar todas" className="mx-auto block size-[22px] appearance-none border-t-2 border-l-2 border-[#777] bg-[#fafafa]" />
          </th>
        )}
        {data.map((c, i) => (
          <th key={i} className={`overflow-hidden border-2 border-[#222] p-0 text-left whitespace-nowrap ${c.w} ${c.pad ?? 'pl-0.5'} ${c.bold ? 'font-bold' : 'font-normal'}`}>
            {c.head}
          </th>
        ))}
      </tr>
    </thead>
    <tbody>
      <tr className={rowH}>
        <td className="border-2 border-[#222] p-0"><RowMark /></td>
        {check && (
          <td className="border border-[#999] bg-white p-0">
            <label className="flex justify-center">
              <input type="checkbox" defaultChecked aria-label="Selecionar 9786" className="peer size-5 appearance-none border border-[#666] bg-white" />
              <svg viewBox="0 0 20 20" className="absolute hidden size-5 peer-checked:block" aria-hidden="true">
                <path d="M5 8v5l3 3 8-8V4L8 11z" fill="#000" />
              </svg>
            </label>
          </td>
        )}
        {data.map((c, i) => (
          <td key={i} className={`border border-[#999] p-0 leading-[23px] whitespace-pre ${c.right ? 'pr-1 text-right' : 'pl-0.5'}`}>{c.cell}</td>
        ))}
      </tr>
    </tbody>
  </table>
);

const Arrow = ({ d, label }: { d: string; label: string }) => (
  <button className="flex w-[30px] items-center justify-center border-2 border-[#a8a8a8] bg-[#f4f4f4]" aria-label={label}>
    <svg viewBox="0 0 8 14" className="h-3.5 w-2"><path d={d} fill="#9a9a9a" /></svg>
  </button>
);

const Pager = () => (
  <div className="flex h-[33px] shrink-0">
    <span className="flex w-[75px] items-center pt-0.5 pl-3">1 de 1</span>
    <span className="w-[87px] bg-[#f0f0f0]" />
    <Arrow d="M8 0v14L0 7z" label="Rolar para a esquerda" />
    <span className="flex-1 bg-[#f7f7f7]" />
    <Arrow d="M0 0v14l8-7z" label="Rolar para a direita" />
  </div>
);

const BottomPanel = ({ title, className, children }: { title: string; className: string; children: React.ReactNode }) => (
  <section className={`flex flex-col overflow-hidden border-t-4 border-r-3 border-t-white border-r-[#a5a5a5] ${className}`}>
    <h2 className="flex h-[53px] shrink-0 items-center border-b-3 border-[#a5a5a5] pt-1 pl-2 text-[27px] whitespace-nowrap">{title}</h2>
    <div className="h-[15px] overflow-hidden bg-white pt-1 leading-7 whitespace-nowrap">{children}</div>
  </section>
);

const Workspace = () => (
  <main className="flex min-w-0 flex-1 flex-col overflow-hidden pr-0.5">
    <div className="flex h-[41px] shrink-0 items-end justify-between border-b-2 border-[#444] bg-[#fdfdfd]" role="tablist">
      <div className="flex">
        <button role="tab" aria-selected="false" className="w-[226px] pt-1.5 pl-[19px] text-left whitespace-nowrap">Tran<u>s</u>ações Agendadas</button>
        <div className="relative top-0.5 flex h-[37px] w-[243px] items-center justify-between border-2 border-b-0 border-[#222] bg-[#f0f0f0] pr-1 pl-1.5">
          <button role="tab" aria-selected="true" className="pt-0.5 whitespace-nowrap">Transaçõ<u>e</u>s Rejeitadas</button>
          <CloseBox />
        </div>
      </div>
      <span className="mb-2"><CloseBox /></span>
    </div>

    <div className="mt-1 flex h-[43px] shrink-0 pr-0.5 pl-[3px]">
      <div className="flex w-[380px] border-2 border-[#bdbdbd] bg-[#fdfdfd]">
        <Grip />
        <span className="w-2" />
        <IconStrip list={gridEdit} />
      </div>
      <div className="flex flex-1 overflow-hidden border-2 border-l-0 border-[#bdbdbd] bg-[#fdfdfd]">
        <Grip />
        <span className="w-2" />
        <IconStrip list={gridActions} />
      </div>
      <div className="ml-[3px] w-[167px] border-2 border-[#bdbdbd] bg-[#fdfdfd]" />
    </div>

    <div className="mt-1 ml-px flex h-[446px] shrink-0 flex-col justify-between border-r border-b-3 border-l border-[#a5a5a5] bg-[#fdfdfd]">
      <Grid data={cols} check rowH="h-[99px]" />
      <Pager />
    </div>

    <div className="ml-[5px] flex h-9 shrink-0 items-center">
      <span className="w-[180px]">Paginando</span>
      <span>: TcxCheckBox</span>
    </div>

    <div className="mr-0.5 ml-[3px] flex h-[260px] shrink-0 flex-col justify-between border-x border-b-3 border-[#a5a5a5] bg-[#fdfdfd]">
      <Grid data={errCols} rowH="h-[55px]" />
      <Pager />
    </div>

    <div className="mt-2 ml-1 flex min-h-0 flex-1 gap-1 border-b-4 border-[#a5a5a5]">
      <BottomPanel title="Alterações no Sistema" className="w-[614px]">
        <span className="pl-1 text-[18px]">230111.SQL</span>
      </BottomPanel>
      <BottomPanel title="Informações dos Campos para o XML - Evento S-2230" className="flex-1">
        <span className="pl-2 font-bold">eSocial: S-2230</span>
      </BottomPanel>
    </div>
  </main>
);

const App: React.FC = () => {
  return (
    <div className="relative flex h-screen flex-col overflow-hidden bg-[#f0f0f0] font-['DejaVu_Sans_Condensed','Noto_Sans',sans-serif] text-[19px] text-[#2a2a2a]">
      <Title />
      <Toolbar />

      <div className="flex min-h-0 flex-1">
        <div className="flex min-w-0 flex-1 flex-col border-r-2 border-b-4 border-l-2 border-r-white border-b-[#fafafa] border-l-white pt-2">
          <div className="flex h-[71px] shrink-0 items-end border-t-4 border-white pl-1.5" role="tablist">
            <TabShape active clip={slantBig} w="h-[67px] w-[199px]" pad="pl-[62px]">
              <Icon name="esocial" className="h-[55px] w-14" />
              <span className="ml-1"><span>e</span><u>S</u>ocial</span>
            </TabShape>
            <TabShape clip={slantMid} w="h-[67px] w-[194px]" pad="pl-8">
              <Icon name="fist" className="h-[54px] w-[52px]" />
              <span className="ml-2">EFD-<u>R</u>einf</span>
            </TabShape>
            <TabShape clip={slantMid} w="h-[67px] w-[183px]" pad="pl-9">
              <Icon name="pages" className="h-[52px] w-[46px]" />
              <span className="ml-2">DCTFWeb</span>
            </TabShape>
            <span className="h-0.5 flex-1 bg-[#a6a6a6]" />
          </div>

          <div className="mt-[7px] mr-1 ml-2 flex min-h-0 flex-1 flex-col border-4 border-white">
            <div className="flex h-[37px] shrink-0 items-end" role="tablist">
              <TabShape active clip={slantSmall} w="h-[37px] w-[170px]" pad="pl-[38px]">
                <Icon name="gear" className="size-[26px]" />
                <span className="ml-3.5"><u>E</u>ventos</span>
              </TabShape>
              <TabShape clip={slantTiny} w="h-[37px] w-[163px]" pad="pl-5">
                <Icon name="bin" className="size-[26px]" />
                <span className="ml-3.5"><u>A</u>uditorias</span>
              </TabShape>
              <span className="h-0.5 flex-1 bg-[#a6a6a6]" />
            </div>
            <div className="flex min-h-0 flex-1">
              <Sidebar />
              <Workspace />
            </div>
          </div>

          <p className="h-[38px] shrink-0 pt-1 pl-[9px] font-['Open_Sans','Noto_Sans',sans-serif] text-[20px] leading-8">cxPageControl1: TcxPageControl</p>
        </div>
        <div className="ml-2 w-[34px] border-b-3 border-l-2 border-b-[#8a8a8a] border-l-[#d0d0d0]" />
      </div>

      <footer className="flex h-[34px] shrink-0 items-center pt-1 font-['Open_Sans','Noto_Sans',sans-serif] whitespace-nowrap">
        <span className="w-[122px] pl-1">v.18.12.2.0</span>
        <span className="w-[245px] border-l border-[#ddd] pl-[9px]">administrador:baseajuda</span>
        <span className="flex-1 border-l border-[#ddd] pl-2">0001 Empresa EAD</span>
        <span className="h-full w-[441px] border-l border-[#ddd]" />
        <span className="w-[406px] border-l border-[#ddd] pl-2">Período: 136 - 01 - 01/07/2018 - 31/07/2018</span>
      </footer>

      <div className="flex h-[71px] shrink-0 bg-[#040606] font-['Open_Sans','Noto_Sans',sans-serif]">
        <button className="flex w-[85px] items-center justify-center" aria-label="Iniciar">
          <Icon name="windows" className="h-[30px] w-7" />
        </button>
        <input
          type="text"
          aria-label="Pesquisar"
          placeholder="Pesquisar na Web e no Windows"
          className="w-[604px] bg-[#333] px-[21px] text-[25px] text-white placeholder:text-[#9a9a9a]"
        />
      </div>

      <svg viewBox="0 0 20 32" className="absolute top-[492px] left-[985px] h-8 w-5" aria-hidden="true">
        <path d="M1 1v25l6-5 4 10 4-2-4-9h8z" fill="#fff" stroke="#333" strokeWidth="1.500" />
      </svg>
    </div>
  );
};

export default App;
